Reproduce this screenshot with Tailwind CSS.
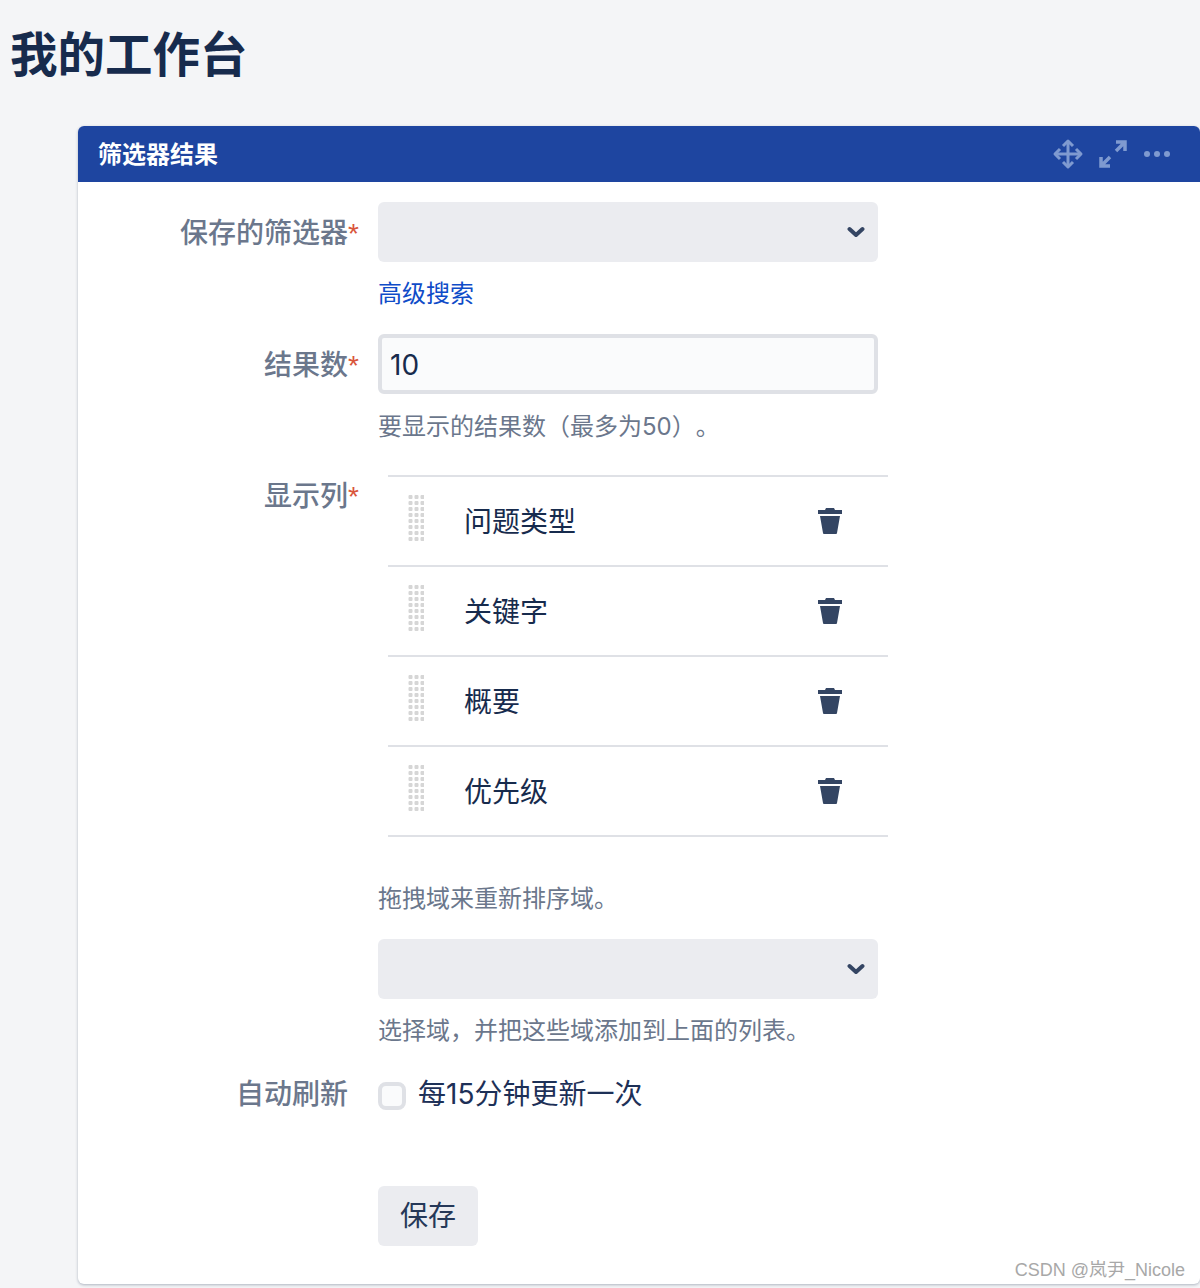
<!DOCTYPE html>
<html lang="zh">

<head>
    <meta charset="utf-8">
    <meta name="viewport" content="width=device-width,initial-scale=1.0">
    <title>我的工作台</title>
    <script src="https://cdn.jsdelivr.net/npm/@tailwindcss/browser@4"></script>
</head>

<body class="relative h-[1288px] overflow-hidden bg-[#f4f5f7] font-['Inter','Noto_Sans_CJK_SC',sans-serif] text-[#172b4d] [text-spacing-trim:space-all]">
    <h1 class="h-[126px] pl-[10px] pt-[25px] text-[47.500px] leading-[60px] font-bold text-[#172b4d]">我的工作台</h1>

    <section class="ml-[78px] h-[1158px] rounded-[6px] bg-white shadow-[0_1px_3px_rgba(9,30,66,0.3)]">
        <div class="flex h-[56px] items-center justify-between rounded-t-[6px] bg-[#1e45a0] pl-[20px] pr-[30px]">
            <span class="pt-[2px] text-[24px] leading-[54px] font-bold text-white">筛选器结果</span>
            <div class="flex items-center gap-[14px]">
                <svg class="h-[32px] w-[32px]" viewBox="0 0 32 32" fill="none" stroke="#7f9ad0" stroke-width="3">
                    <path d="M16 4v24M4 16h24" />
                    <path d="M11 8l5-5 5 5M11 24l5 5 5-5M8 11l-5 5 5 5M24 11l5 5-5 5" stroke-linejoin="round" />
                </svg>
                <svg class="h-[30px] w-[30px]" viewBox="0 0 30 30" fill="none" stroke="#7f9ad0" stroke-width="3.500">
                    <path d="M18 3h9v9M27 3l-9 9M3 18v9h9M3 27l9-9" />
                </svg>
                <div class="ml-[2px] flex w-[26px] justify-between">
                    <span class="h-[6px] w-[6px] rounded-full bg-[#7f9ad0]"></span>
                    <span class="h-[6px] w-[6px] rounded-full bg-[#7f9ad0]"></span>
                    <span class="h-[6px] w-[6px] rounded-full bg-[#7f9ad0]"></span>
                </div>
            </div>
        </div>

        <form class="grid grid-cols-[300px_1fr] pt-[20px]">
            <label class="pr-[19px] pt-[11px] text-right text-[28px] leading-[40px] font-medium text-[#6b778c]">保存的筛选器<span class="font-['Liberation_Sans'] font-normal text-[#d9553b]">*</span></label>
            <div>
                <div class="flex h-[60px] w-[500px] items-center justify-end rounded-[6px] bg-[#ebecf0] pr-[13px]">
                    <svg class="h-[16px] w-[18px]" viewBox="0 0 18 16" fill="none" stroke="#344563" stroke-width="4" stroke-linecap="round" stroke-linejoin="round">
                        <path d="M2.500 5l6.500 6 6.500-6" />
                    </svg>
                </div>
                <a class="mt-[16px] block text-[24px] leading-[32px] text-[#0f4cc8]">高级搜索</a>
            </div>

            <label class="mt-[24px] pr-[19px] pt-[11px] text-right text-[28px] leading-[40px] font-medium text-[#6b778c]">结果数<span class="font-['Liberation_Sans'] font-normal text-[#d9553b]">*</span></label>
            <div class="mt-[24px]">
                <div class="flex h-[60px] w-[500px] items-center rounded-[6px] border-[4px] border-[#dfe1e6] bg-[#fafbfc] px-[8px] pt-[2px] text-[28px] text-[#172b4d]">10</div>
                <p class="mt-[17px] text-[24px] leading-[32px] text-[#6b778c]">要显示的结果数（最多为50）。</p>
            </div>

            <label class="mt-[21px] pr-[19px] pt-[12px] text-right text-[28px] leading-[40px] font-medium text-[#6b778c]">显示列<span class="font-['Liberation_Sans'] font-normal text-[#d9553b]">*</span></label>
            <div class="mt-[32px]">
                <ul class="ml-[10px] w-[500px] border-t-2 border-[#dfe1e6]">
                    <li class="flex h-[90px] items-center border-b-2 border-[#dfe1e6] pl-[20px] pr-[46px] text-[28px]">
                        <svg class="mb-[6px] h-[48px] w-[16px]" viewBox="0 0 16 48">
                            <defs>
                                <pattern id="grip" width="6" height="6" patternUnits="userSpaceOnUse">
                                    <rect x="0.500" y="1" width="4" height="4" rx="1" fill="#d6d6d6" />
                                </pattern>
                            </defs>
                            <rect width="16" height="48" fill="url(#grip)" />
                        </svg>
                        <span class="ml-[40px] flex-1 pt-[2px]">问题类型</span>
                        <svg class="h-[26px] w-[24px]" viewBox="0 0 24 26" fill="#344563">
                            <path d="M8 0h8l1 2h7v4H0V2h7zM2 8h20l-3 17a1 1 0 0 1-1 1H6a1 1 0 0 1-1-1z" />
                        </svg>
                    </li>
                    <li class="flex h-[90px] items-center border-b-2 border-[#dfe1e6] pl-[20px] pr-[46px] text-[28px]">
                        <svg class="mb-[6px] h-[48px] w-[16px]" viewBox="0 0 16 48">
                            <rect width="16" height="48" fill="url(#grip)" />
                        </svg>
                        <span class="ml-[40px] flex-1 pt-[2px]">关键字</span>
                        <svg class="h-[26px] w-[24px]" viewBox="0 0 24 26" fill="#344563">
                            <path d="M8 0h8l1 2h7v4H0V2h7zM2 8h20l-3 17a1 1 0 0 1-1 1H6a1 1 0 0 1-1-1z" />
                        </svg>
                    </li>
                    <li class="flex h-[90px] items-center border-b-2 border-[#dfe1e6] pl-[20px] pr-[46px] text-[28px]">
                        <svg class="mb-[6px] h-[48px] w-[16px]" viewBox="0 0 16 48">
                            <rect width="16" height="48" fill="url(#grip)" />
                        </svg>
                        <span class="ml-[40px] flex-1 pt-[2px]">概要</span>
                        <svg class="h-[26px] w-[24px]" viewBox="0 0 24 26" fill="#344563">
                            <path d="M8 0h8l1 2h7v4H0V2h7zM2 8h20l-3 17a1 1 0 0 1-1 1H6a1 1 0 0 1-1-1z" />
                        </svg>
                    </li>
                    <li class="flex h-[90px] items-center border-b-2 border-[#dfe1e6] pl-[20px] pr-[46px] text-[28px]">
                        <svg class="mb-[6px] h-[48px] w-[16px]" viewBox="0 0 16 48">
                            <rect width="16" height="48" fill="url(#grip)" />
                        </svg>
                        <span class="ml-[40px] flex-1 pt-[2px]">优先级</span>
                        <svg class="h-[26px] w-[24px]" viewBox="0 0 24 26" fill="#344563">
                            <path d="M8 0h8l1 2h7v4H0V2h7zM2 8h20l-3 17a1 1 0 0 1-1 1H6a1 1 0 0 1-1-1z" />
                        </svg>
                    </li>
                </ul>
                <p class="mt-[46px] text-[24px] leading-[32px] text-[#6b778c]">拖拽域来重新排序域。</p>
                <div class="mt-[24px] flex h-[60px] w-[500px] items-center justify-end rounded-[6px] bg-[#ebecf0] pr-[13px]">
                    <svg class="h-[16px] w-[18px]" viewBox="0 0 18 16" fill="none" stroke="#344563" stroke-width="4" stroke-linecap="round" stroke-linejoin="round">
                        <path d="M2.500 5l6.500 6 6.500-6" />
                    </svg>
                </div>
                <p class="mt-[16px] text-[24px] leading-[32px] text-[#6b778c]">选择域，并把这些域添加到上面的列表。</p>
            </div>

            <label class="mt-[27px] pr-[30px] text-right text-[28px] leading-[40px] font-medium text-[#6b778c]">自动刷新</label>
            <div class="mt-[27px] flex h-[40px] items-center gap-[12px] text-[28px] text-[#1d3057]">
                <span class="mt-[4px] h-[28px] w-[28px] rounded-[8px] border-[4px] border-[#dfe1e6] bg-[#fafbfc]"></span>
                每15分钟更新一次
            </div>

            <div class="col-start-2 mt-[72px]">
                <button type="button" class="h-[60px] w-[100px] rounded-[6px] bg-[#ebecf0] text-[28px] text-[#253858]">保存</button>
            </div>
        </form>
    </section>

    <span class="absolute bottom-[4px] right-[15px] text-[18px] leading-[28px] font-['Liberation_Sans','Noto_Sans_CJK_SC',sans-serif] text-[#a8a8a8]">CSDN @岚尹_Nicole</span>
</body>

</html>
